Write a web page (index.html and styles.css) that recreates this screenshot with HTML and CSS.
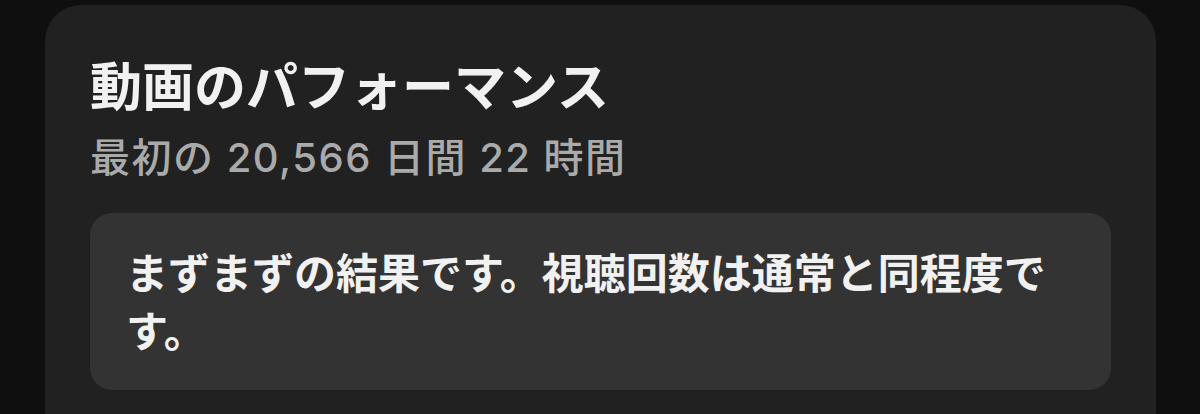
FILE: index.html
```html
<!DOCTYPE html>
<html lang="ja">
<head>
<meta charset="utf-8">
<link rel="stylesheet" href="styles.css">
</head>
<body>
<section class="card">
  <h1 class="title">動画のパフォーマンス</h1>
  <p class="subtitle">最初の 20,566 日間 22 時間</p>
  <div class="summary">
    <p class="summary-text">まずまずの結果です。視聴回数は通常と同程度です。</p>
  </div>
</section>
</body>
</html>
```

FILE: styles.css
```css
html, body {
  margin: 0;
  padding: 0;
  background: #0f0f0f;
  overflow: hidden;
  height: 414px;
}

.card {
  margin: 5px 0 0 45px;
  width: 1111px;
  box-sizing: border-box;
  background: #212121;
  border-radius: 36px;
  padding: 49px 45px 60px 45px;
}

.title {
  margin: 0;
  font-family: "Noto Sans CJK JP", sans-serif;
  font-weight: 700;
  font-size: 52px;
  line-height: 60px;
  color: #f1f1f1;
}

.subtitle {
  margin: 21px 0 0 0;
  font-family: Inter, "Noto Sans CJK JP", sans-serif;
  font-weight: 500;
  font-size: 40px;
  line-height: 46px;
  letter-spacing: 1.5px;
  color: #aaaaaa;
}

.summary {
  margin-top: 32px;
  background: #333333;
  border-radius: 22px;
  padding: 29px 36px 32px 36px;
}

.summary-text {
  margin: 0;
  font-family: "Noto Sans CJK JP", sans-serif;
  font-weight: 700;
  font-size: 42px;
  line-height: 58px;
  color: #f1f1f1;
}
```
